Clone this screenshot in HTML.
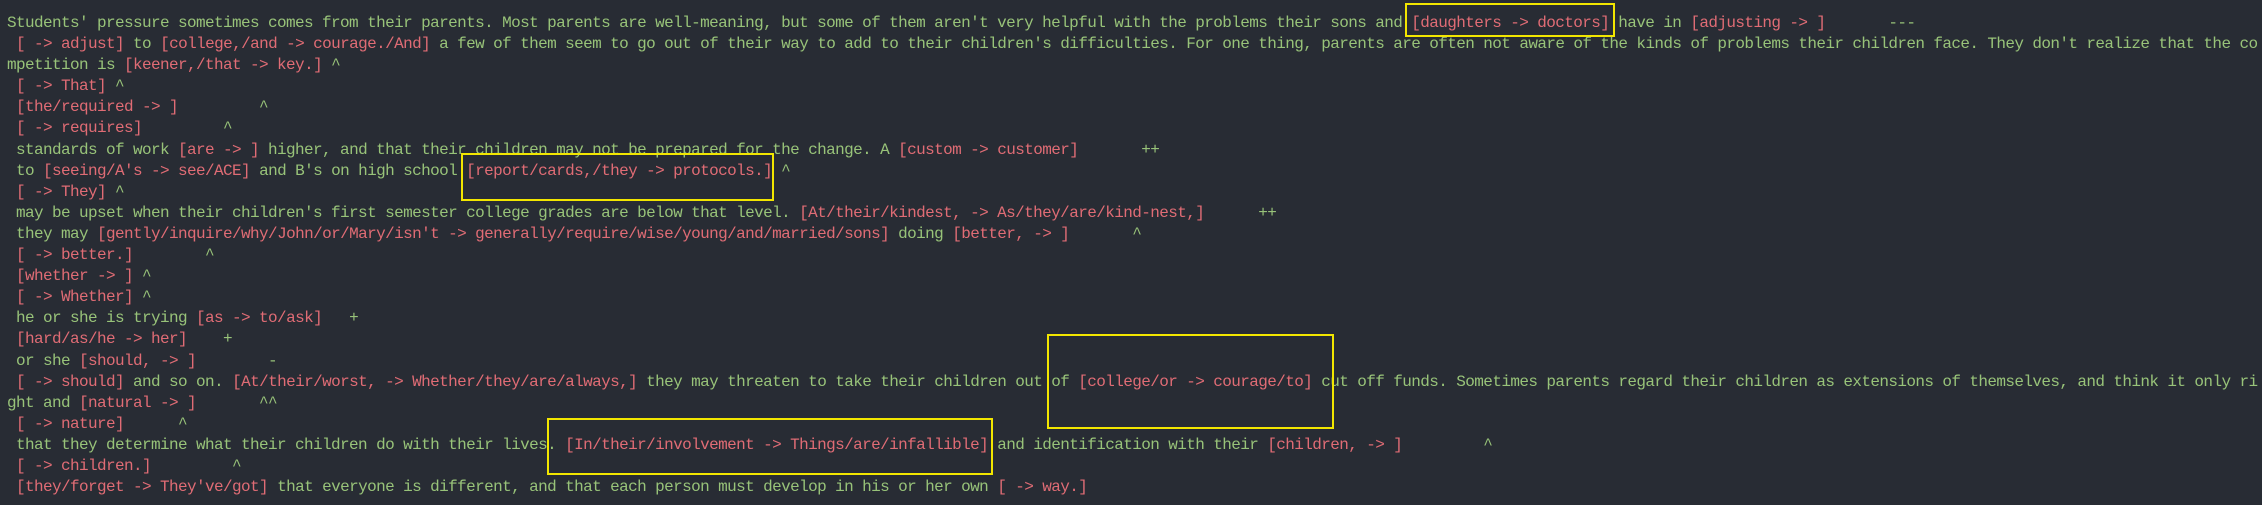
<!DOCTYPE html>
<html><head><meta charset="utf-8"><style>
html,body{margin:0;padding:0;background:#282c34;width:2262px;height:505px;overflow:hidden}
pre{margin:0;position:absolute;left:7px;top:13px;font-family:"Liberation Mono",monospace;font-size:16px;letter-spacing:-0.6px;line-height:21.1px;color:#98c379;white-space:pre}
.r{color:#e06c75}
.b{position:absolute;border:2px solid #f2e600;box-sizing:border-box}
</style></head><body>
<pre>Students' pressure sometimes comes from their parents. Most parents are well-meaning, but some of them aren't very helpful with the problems their sons and <span class="r">[daughters -&gt; doctors]</span> have in <span class="r">[adjusting -&gt; ]</span>       ---
 <span class="r">[ -&gt; adjust]</span> to <span class="r">[college,/and -&gt; courage./And]</span> a few of them seem to go out of their way to add to their children's difficulties. For one thing, parents are often not aware of the kinds of problems their children face. They don't realize that the co
mpetition is <span class="r">[keener,/that -&gt; key.]</span> ^
 <span class="r">[ -&gt; That]</span> ^
 <span class="r">[the/required -&gt; ]</span>         ^
 <span class="r">[ -&gt; requires]</span>         ^
 standards of work <span class="r">[are -&gt; ]</span> higher, and that their children may not be prepared for the change. A <span class="r">[custom -&gt; customer]</span>       ++
 to <span class="r">[seeing/A's -&gt; see/ACE]</span> and B's on high school <span class="r">[report/cards,/they -&gt; protocols.]</span> ^
 <span class="r">[ -&gt; They]</span> ^
 may be upset when their children's first semester college grades are below that level. <span class="r">[At/their/kindest, -&gt; As/they/are/kind-nest,]</span>      ++
 they may <span class="r">[gently/inquire/why/John/or/Mary/isn't -&gt; generally/require/wise/young/and/married/sons]</span> doing <span class="r">[better, -&gt; ]</span>       ^
 <span class="r">[ -&gt; better.]</span>        ^
 <span class="r">[whether -&gt; ]</span> ^
 <span class="r">[ -&gt; Whether]</span> ^
 he or she is trying <span class="r">[as -&gt; to/ask]</span>   +
 <span class="r">[hard/as/he -&gt; her]</span>    +
 or she <span class="r">[should, -&gt; ]</span>        -
 <span class="r">[ -&gt; should]</span> and so on. <span class="r">[At/their/worst, -&gt; Whether/they/are/always,]</span> they may threaten to take their children out of <span class="r">[college/or -&gt; courage/to]</span> cut off funds. Sometimes parents regard their children as extensions of themselves, and think it only ri
ght and <span class="r">[natural -&gt; ]</span>       ^^
 <span class="r">[ -&gt; nature]</span>      ^
 that they determine what their children do with their lives. <span class="r">[In/their/involvement -&gt; Things/are/infallible]</span> and identification with their <span class="r">[children, -&gt; ]</span>         ^
 <span class="r">[ -&gt; children.]</span>         ^
 <span class="r">[they/forget -&gt; They've/got]</span> that everyone is different, and that each person must develop in his or her own <span class="r">[ -&gt; way.]</span></pre>
<div class="b" style="left:1405px;top:3px;width:210px;height:34px"></div>
<div class="b" style="left:461px;top:153px;width:313px;height:48px"></div>
<div class="b" style="left:1047px;top:334px;width:287px;height:95px"></div>
<div class="b" style="left:547px;top:418px;width:446px;height:57px"></div>
</body></html>
